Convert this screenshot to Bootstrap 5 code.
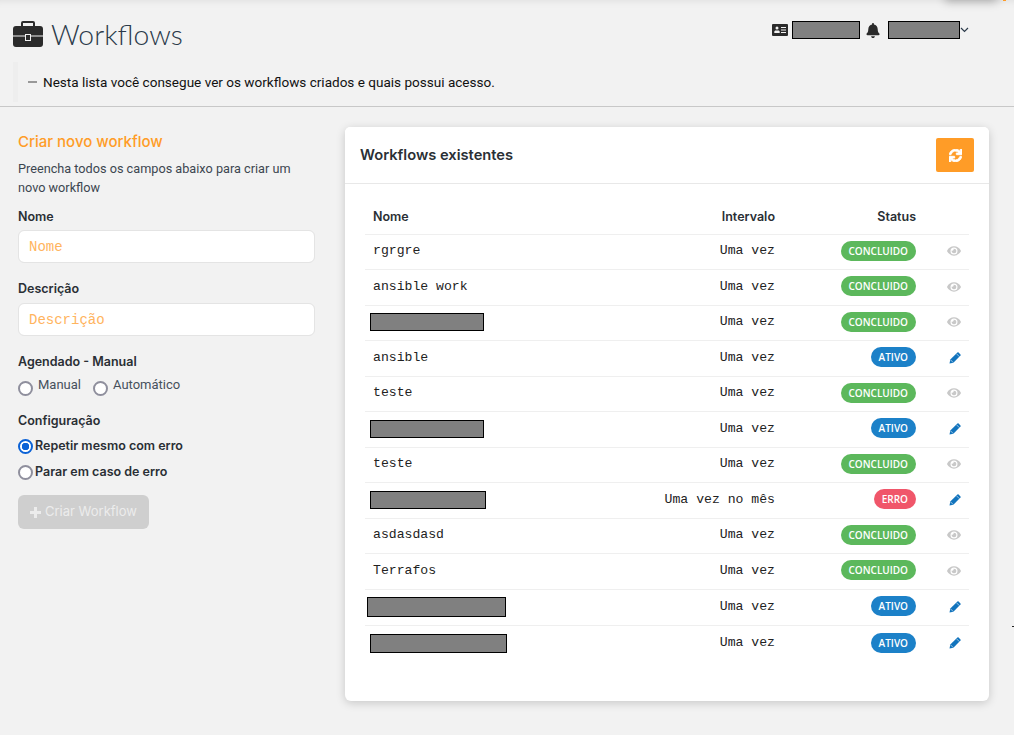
<!DOCTYPE html>
<html lang="pt-BR">
<head>
  <meta charset="UTF-8" />
  <meta name="viewport" content="width=device-width, initial-scale=1" />
  <title>Workflows</title>
  <link href="https://cdn.jsdelivr.net/npm/bootstrap@5.3.0/dist/css/bootstrap.min.css" rel="stylesheet" />
<style>
  body {
    background: #f2f2f2;
    color: #212529;
    font-family: Roboto, "Noto Sans", sans-serif;
    font-size: 13px;
    height: 735px;
    overflow: hidden;
    box-shadow: inset 0 8px 8px -8px rgba(0, 0, 0, 0.1);
  }

  /* top of the page */
  .page-top {
    height: 107px;
    padding: 15px 45px 0 13px;
    border-bottom: 1px solid #c8c8c8;
  }
  .page-title {
    font-family: Lato, sans-serif;
    font-weight: 300;
    font-size: 28.3px;
    line-height: 38px;
    color: #2b3a4a;
    margin: 0;
  }
  .briefcase-icon { width: 30px; height: 26px; fill: #2b2b2b; }
  .user-box { margin-top: 6px; }
  .user-box svg { fill: #2b2b2b; }
  .bell-gap { margin: 0 8px 0 6px; }
  .hidden-data {
    display: block;
    background: #808080;
    border: 1px solid #000;
    flex: none;
  }
  .page-note {
    margin: 9px 0 0;
    padding: 0 0 0 10px;
    height: 40px;
    border-left: 5px solid #eeeeee;
    display: flex;
    align-items: center;
    font-size: 13.55px;
    color: #111;
  }
  .note-dash { width: 9px; height: 2px; background: #999; margin-right: 6px; flex: none; }

  /* bits of a menu and a marker cut off by the window */
  .menu-peek {
    position: absolute;
    top: -16px;
    left: 945px;
    width: 52px;
    height: 16px;
    box-shadow: 0 2px 10px rgba(0, 0, 0, 0.25);
  }
  .menu-dot { position: absolute; top: 0; left: 1003px; width: 3px; height: 1px; background: #ff9c27; }
  .edge-tick { position: absolute; top: 626px; left: 1012px; width: 2px; height: 1px; background: #222; }

  /* left form */
  .form-pane { width: 345px; flex: none; padding: 24px 30px 0 18px; }
  .form-title { font-family: Inter, sans-serif; color: #ff9c27; font-size: 15px; font-weight: 500; line-height: 20px; margin: 1px 0 8px; }
  .form-help { color: #3c4650; font-size: 12.7px; line-height: 18.5px; margin: 0 0 11px; }
  .field-label { font-family: Inter, sans-serif; font-weight: 600; font-size: 12.5px; color: #2a2f35; line-height: 18px; margin-bottom: 4px; display: block; }
  .label-wide { margin-bottom: 5px; }
  .label-radio { margin-bottom: 10px; }
  .label-config { margin-bottom: 7px; }
  .field-input.form-control {
    height: 33px;
    padding: 0 10px;
    font-family: "Liberation Mono", monospace;
    font-size: 14px;
    border-color: #e4e4e4;
    margin-bottom: 17px;
  }
  .field-input.form-control::placeholder { color: #ffb45e; opacity: 1; }
  .radio-dot.form-check-input {
    width: 15px;
    height: 15px;
    margin: 0;
    flex: none;
    border: 2px solid #8f8f9d;
    background-color: #fff;
    background-image: none;
  }
  .radio-dot.form-check-input:checked {
    border-color: #0b62d6;
    background-image: radial-gradient(circle, #0b62d6 0 3.5px, #fff 4px);
  }
  .radio-row { gap: 5px; margin-bottom: 16px; }
  .radio-plain { color: #46505c; font-size: 13px; margin-top: -7px; }
  .radio-plain.first-option { margin-right: 7px; }
  .radio-line { gap: 2px; margin-bottom: 7px; }
  .radio-strong { font-family: Inter, sans-serif; font-weight: 600; font-size: 12.5px; color: #2a2f35; }
  .create-btn.btn {
    font-family: Inter, sans-serif;
    background: #cfcfcf;
    border: 0;
    color: #ececec;
    font-size: 13px;
    width: 131px;
    height: 34px;
    padding: 1px 0 0;
    margin-top: 13px;
    opacity: 1;
  }
  .create-btn svg { fill: #ececec; width: 11px; height: 11px; }

  /* card with the list */
  .flow-card.card {
    width: 644px;
    height: 574px;
    margin-top: 20px;
    border: 0;
    border-radius: 6px;
    box-shadow: 0 2px 10px rgba(0, 0, 0, 0.18);
  }
  .flow-card .card-header {
    height: 57px;
    background: #fff;
    border-bottom: 1px solid #e8e8e8;
    padding: 0 15px;
  }
  .flow-card h5 { font-family: Inter, sans-serif; font-size: 14.7px; font-weight: 600; margin: 2px 0 0; color: #2a2f35; }
  .refresh-btn.btn {
    background: #ff9c27;
    border: 0;
    width: 38px;
    height: 34px;
    padding: 0;
    border-radius: 2px;
  }
  .refresh-btn svg { fill: #fff; stroke: #fff; stroke-width: 36px; width: 13px; height: 13px; }
  .flow-table { margin: 16px 20px 0; width: 604px; }
  .flow-table.table > :not(caption) > * > * { padding: 0 8px 1px; height: 35.5px; vertical-align: middle; border-color: #efefef; }
  .flow-table.table > thead > * > * { height: 34px; padding-top: 2px; padding-bottom: 0; }
  .flow-table.table > tbody > .row-tall > * { height: 36.5px; }
  .flow-table.table > tbody > :last-child > * { border-bottom: 0; }
  .flow-table th { font-family: Inter, sans-serif; font-weight: 600; font-size: 12.5px; color: #2a2f35; }
  .flow-table td { font-family: "Liberation Mono", monospace; font-size: 13.15px; color: #222; }
  .cell-name { width: 260px; }
  .cell-status { width: 141px; }
  .cell-action { width: 45px; }
  .state-pill.badge {
    font-family: "Open Sans", sans-serif;
    font-size: 10px;
    font-weight: 600;
    height: 20px;
    line-height: 20px;
    padding: 0 8px;
    border-radius: 10px;
    display: inline-block;
  }
  .pill-done { background: #5cb85c; }
  .pill-live { background: #1c81c8; }
  .pill-fail { background: #f0566a; }
  .eye-icon { fill: #c8c8c8; width: 14px; height: 14px; display: block; margin-left: auto; }
  .pen-icon { width: 12px; height: 12px; display: block; margin-left: auto; }
</style>
</head>
<body>
  <div class="page-top">
    <div class="d-flex justify-content-between align-items-start">
      <div class="d-flex align-items-center gap-2">
        <svg class="briefcase-icon" viewBox="0 0 30 26"><path fill-rule="evenodd" d="M10 0h10a2 2 0 0 1 2 2v3h5a3 3 0 0 1 3 3v6.500H18V13h-6v1.500H0V8a3 3 0 0 1 3-3h5V2a2 2 0 0 1 2-2zm0 2v3h10V2zM0 15.500h12V20h6v-4.500h12V23a3 3 0 0 1-3 3H3a3 3 0 0 1-3-3zM13 14h4v5h-4z"/></svg>
        <h1 class="page-title">Workflows</h1>
      </div>
      <div class="user-box d-flex align-items-center">
        <svg width="16" height="14" viewBox="0 0 16 14" class="me-1"><path fill-rule="evenodd" d="M1 1h14a1 1 0 0 1 1 1v10a1 1 0 0 1-1 1H1a1 1 0 0 1-1-1V2a1 1 0 0 1 1-1zm4 2.500a1.500 1.500 0 1 0 0 3 1.500 1.500 0 0 0 0-3zM2.300 10h5.400V8.800c0-.6-.6-1.200-1.400-1.200H3.700c-.8 0-1.400.6-1.400 1.200zM9 4v1h5V4zm0 2.500v1h5v-1zM9 9v1h5V9z"/></svg>
        <span class="hidden-data" style="width:68px;height:18px"></span>
        <svg width="14" height="15" viewBox="0 0 448 512" class="bell-gap"><path d="M224 512c35.32 0 63.97-28.65 63.97-64H160.03c0 35.35 28.65 64 63.97 64zm215.39-149.71c-19.32-20.76-55.47-51.99-55.47-154.29 0-77.7-54.48-139.9-127.94-155.16V32c0-17.67-14.32-32-31.98-32s-31.98 14.33-31.98 32v20.84C118.56 68.1 64.08 130.3 64.08 208c0 102.3-36.15 133.53-55.47 154.29-6 6.45-8.66 14.16-8.61 21.71.11 16.4 12.98 32 32.1 32h383.8c19.12 0 32-15.6 32.1-32 .05-7.55-2.61-15.27-8.61-21.71z"/></svg>
        <span class="hidden-data" style="width:72px;height:18px"></span>
        <svg width="9" height="6" viewBox="0 0 9 6"><path d="M1 1l3.500 3.500L8 1" fill="none" stroke="#2b3a4a" stroke-width="1.200"/></svg>
      </div>
    </div>
    <p class="page-note"><span class="note-dash"></span>Nesta lista você consegue ver os workflows criados e quais possui acesso.</p>
  </div>
  <div class="menu-peek"></div>
  <div class="menu-dot"></div>
  <div class="edge-tick"></div>

  <div class="d-flex">
    <form class="form-pane">
      <h2 class="form-title">Criar novo workflow</h2>
      <p class="form-help">Preencha todos os campos abaixo para criar um novo workflow</p>
      <label class="field-label">Nome</label>
      <input type="text" class="form-control field-input" placeholder="Nome" />
      <label class="field-label label-wide">Descrição</label>
      <input type="text" class="form-control field-input" placeholder="Descrição" />
      <label class="field-label label-radio">Agendado - Manual</label>
      <div class="d-flex align-items-center radio-row">
        <input class="form-check-input radio-dot" type="radio" name="agenda" />
        <span class="radio-plain first-option">Manual</span>
        <input class="form-check-input radio-dot" type="radio" name="agenda" />
        <span class="radio-plain">Automático</span>
      </div>
      <label class="field-label label-config">Configuração</label>
      <div class="d-flex align-items-center radio-line">
        <input class="form-check-input radio-dot" type="radio" name="config" checked />
        <span class="radio-strong">Repetir mesmo com erro</span>
      </div>
      <div class="d-flex align-items-center radio-line">
        <input class="form-check-input radio-dot" type="radio" name="config" />
        <span class="radio-strong">Parar em caso de erro</span>
      </div>
      <button type="button" class="btn create-btn d-flex align-items-center justify-content-center gap-1" disabled>
        <svg viewBox="0 0 11 11"><path d="M4 0h3v4h4v3H7v4H4V7H0V4h4z"/></svg>Criar Workflow
      </button>
    </form>

    <div class="card flow-card">
      <div class="card-header d-flex justify-content-between align-items-center">
        <h5>Workflows existentes</h5>
        <button type="button" class="btn refresh-btn">
          <svg viewBox="0 0 512 512"><path d="M440.65 12.57l4 82.77A247.16 247.16 0 0 0 255.83 8C134.73 8 33.91 94.92 12.29 209.82A12 12 0 0 0 24.09 224h49.05a12 12 0 0 0 11.67-9.26 175.91 175.91 0 0 1 317-56.94l-101.46-4.86a12 12 0 0 0-12.57 12v47.41a12 12 0 0 0 12 12H500a12 12 0 0 0 12-12V12a12 12 0 0 0-12-12h-47.37a12 12 0 0 0-11.98 12.57zM255.83 432a175.61 175.61 0 0 1-146-77.8l101.8 4.87a12 12 0 0 0 12.57-12v-47.4a12 12 0 0 0-12-12H12a12 12 0 0 0-12 12V500a12 12 0 0 0 12 12h47.35a12 12 0 0 0 12-12.6l-4.15-82.57A247.17 247.17 0 0 0 255.83 504c121.11 0 221.93-86.92 243.55-201.82a12 12 0 0 0-11.8-14.18h-49.05a12 12 0 0 0-11.67 9.26A175.86 175.86 0 0 1 255.83 432z"/></svg>
        </button>
      </div>
      <table class="table flow-table mb-0">
        <thead>
          <tr>
            <th class="cell-name">Nome</th>
            <th class="text-end">Intervalo</th>
            <th class="text-end cell-status">Status</th>
            <th class="cell-action"></th>
          </tr>
        </thead>
        <tbody id="flow-rows"></tbody>
      </table>
    </div>
  </div>

  <script>
    // name is a string, or [width, height, left offset] of a blanked-out name
    const flows = [
      ["rgrgre", "Uma vez", "done"],
      ["ansible work", "Uma vez", "done"],
      [[114, 18, -3], "Uma vez", "done"],
      ["ansible", "Uma vez", "live"],
      ["teste", "Uma vez", "done"],
      [[114, 18, -3], "Uma vez", "live"],
      ["teste", "Uma vez", "done"],
      [[116, 18, -3], "Uma vez no mês", "fail"],
      ["asdasdasd", "Uma vez", "done"],
      ["Terrafos", "Uma vez", "done"],
      [[139, 20, -6], "Uma vez", "live"],
      [[137, 19, -3], "Uma vez", "live"],
    ];
    const pills = {
      done: ["pill-done", "CONCLUIDO"],
      live: ["pill-live", "ATIVO"],
      fail: ["pill-fail", "ERRO"],
    };
    const eye = '<svg class="eye-icon" viewBox="0 0 576 512"><path d="M572.52 241.4C518.29 135.59 410.93 64 288 64S57.68 135.64 3.48 241.41a32.35 32.35 0 0 0 0 29.19C57.71 376.41 165.07 448 288 448s230.32-71.64 284.52-177.41a32.35 32.35 0 0 0 0-29.19zM288 400a144 144 0 1 1 144-144 143.93 143.93 0 0 1-144 144zm0-240a95.31 95.31 0 0 0-25.31 3.79 47.85 47.85 0 0 1-66.9 66.9A95.78 95.78 0 1 0 288 160z"/></svg>';
    const pen = '<svg class="pen-icon" viewBox="0 0 12 12"><path fill="#1274bd" d="M8.400.5Q9 .1 9.600.5L11.500 2.400Q11.900 3 11.500 3.600L4.400 10.700.5 11.500 1.300 7.600z"/><path d="M1.500 7.800 4.200 10.500M7.400 1.700 10.300 4.600" stroke="#d5e6f4" stroke-width=".7" fill="none"/></svg>';
    document.getElementById("flow-rows").innerHTML = flows.map(([name, every, state]) => {
      const nameCell = Array.isArray(name)
        ? `<span class="hidden-data" style="width:${name[0]}px;height:${name[1]}px;margin-left:${name[2]}px"></span>`
        : name;
      const rowClass = Array.isArray(name) && name[1] === 20 ? "row-tall" : "";
      return `<tr class="${rowClass}"><td>${nameCell}</td><td class="text-end">${every}</td>` +
        `<td class="text-end"><span class="badge state-pill ${pills[state][0]}">${pills[state][1]}</span></td>` +
        `<td>${state === "done" ? eye : pen}</td></tr>`;
    }).join("");
  </script>
  <script src="https://cdn.jsdelivr.net/npm/bootstrap@5.3.0/dist/js/bootstrap.bundle.min.js"></script>
</body>
</html>
